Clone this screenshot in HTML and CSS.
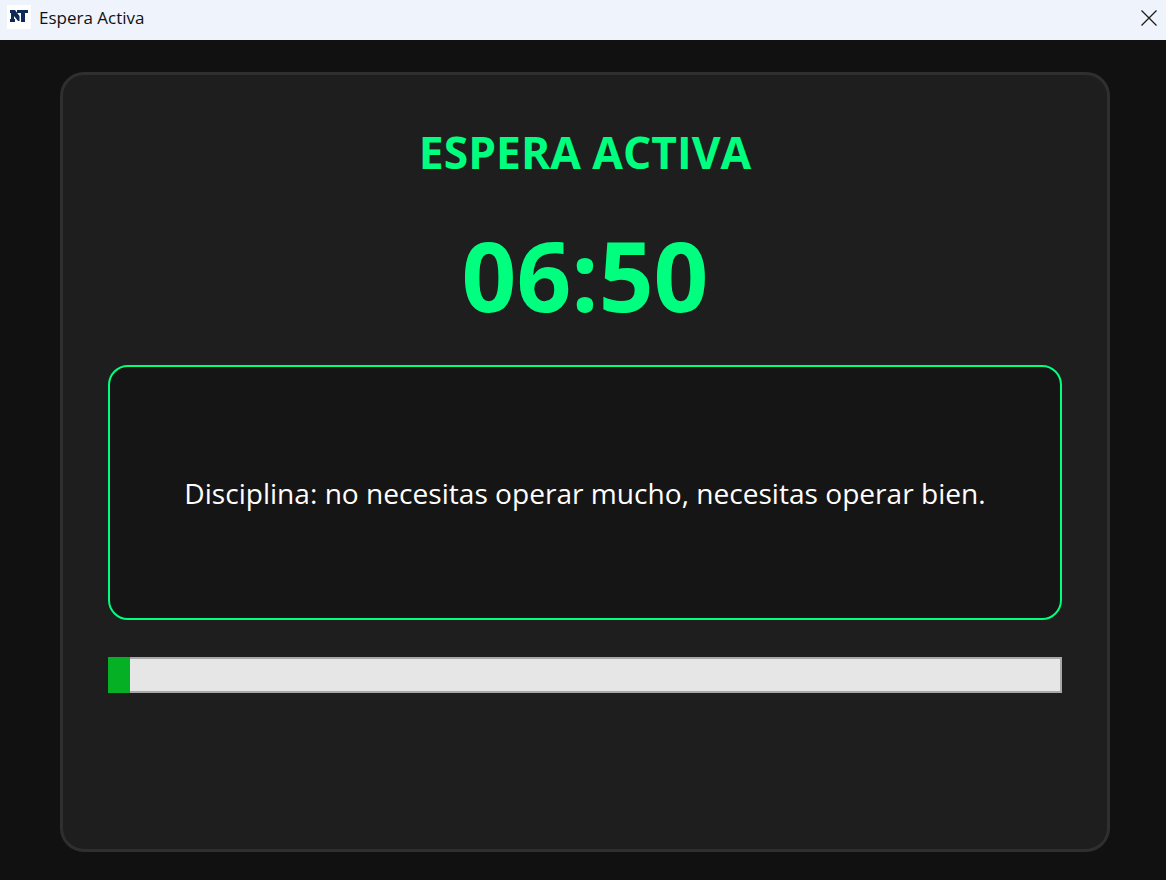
FILE: index.html
```html
<html>

<head>
    <meta charset="utf-8">
    <title>Espera Activa</title>
    <link rel="stylesheet" href="styles.css">
</head>

<body>
    <div class="titleBar">
        <div class="titleLeft">
            <div class="appIcon">
                <svg width="24" height="24" viewBox="0 0 24 24">
                    <path fill="#0f2a56" d="M3 5h5l4.5 6v5h-1.5L7 11v3h1v3H3v-3h1V8H3z"/>
                    <path fill="#0f2a56" d="M10 5h11v3h-3v9h-4V8h-4z"/>
                </svg>
            </div>
            <span class="appTitle">Espera Activa</span>
        </div>
        <svg class="closeIcon" width="16" height="16" viewBox="0 0 16 16">
            <path d="M0.5 0.5L15.5 15.5M15.5 0.5L0.5 15.5" stroke="#1c1c1c" stroke-width="1.3" fill="none"/>
        </svg>
    </div>

    <div class="content">
        <div class="card">
            <div class="heading">ESPERA ACTIVA</div>
            <div class="timer">06:50</div>
            <div class="messageBox">
                <p class="message">Disciplina: no necesitas operar mucho, necesitas operar bien.</p>
            </div>
            <div class="progress">
                <div class="progressFill" style="width: 2.3%"></div>
            </div>
        </div>
    </div>
</body>
</html>
```

FILE: styles.css
```css
html,
body {
    margin: 0;
    height: 100%;
}

body {
    display: flex;
    flex-direction: column;
    background-color: #111111;
    font-family: "Open Sans", "Noto Sans", sans-serif;
}

.titleBar {
    height: 40px;
    flex-shrink: 0;
    display: flex;
    align-items: center;
    justify-content: space-between;
    padding: 0 9px 0 7px;
    background-color: #eff3fb;
}

.titleLeft {
    display: flex;
    align-items: center;
    gap: 8px;
    margin-top: -6px;
}

.appIcon {
    width: 24px;
    height: 24px;
    background-color: #ffffff;
}

.appTitle {
    font-size: 17px;
    color: #111111;
}

.closeIcon {
    display: block;
    margin-top: -4px;
}

.content {
    flex: 1;
    padding: 32px 56px 28px 60px;
    display: flex;
}

.card {
    flex: 1;
    box-sizing: border-box;
    padding: 0 45px;
    background-color: #1e1e1e;
    border: 3px solid #2f2f2f;
    border-radius: 24px;
}

.heading {
    margin-top: 49px;
    height: 56px;
    line-height: 56px;
    text-align: center;
    font-size: 44.4px;
    font-weight: 700;
    color: #00ff7f;
}

.timer {
    margin-top: 36px;
    height: 118px;
    line-height: 118px;
    text-align: center;
    font-size: 96px;
    font-weight: 700;
    color: #00ff7f;
}

.messageBox {
    margin-top: 31px;
    height: 255px;
    box-sizing: border-box;
    display: flex;
    align-items: center;
    justify-content: center;
    background-color: #151515;
    border: 2px solid #00ff7f;
    border-radius: 20px;
}

.message {
    margin: 0;
    font-size: 28.1px;
    color: #ffffff;
}

.progress {
    margin-top: 37px;
    height: 36px;
    box-sizing: border-box;
    background-color: #e6e6e6;
    border: 2px solid #a8a8a8;
    position: relative;
}

.progressFill {
    position: absolute;
    top: -2px;
    bottom: -2px;
    left: -2px;
    background-color: #06b025;
}
```
